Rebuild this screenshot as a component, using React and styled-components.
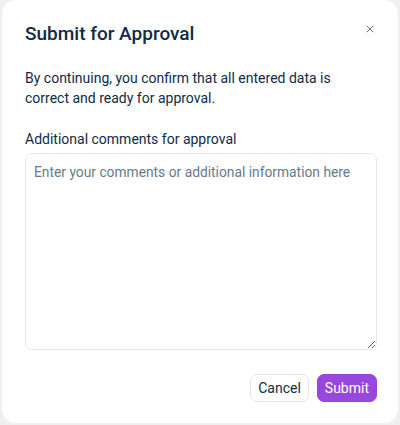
import React from "react";
import styled, { createGlobalStyle } from "styled-components";
import { X } from "lucide-react";

const GlobalStyle = createGlobalStyle`
  html, body {
    margin: 0;
    padding: 0;
    background: #efefef;
    font-family: Roboto, "Noto Sans", sans-serif;
  }
  * { box-sizing: border-box; }
`;

const Page = styled.div`
  width: 400px;
  height: 425px;
  padding: 0 2px 2px 2px;
  display: flex;
`;

const Dialog = styled.div`
  position: relative;
  flex: 1;
  background: #ffffff;
  border-radius: 14px;
  padding: 22px 21px 21px 23px;
  display: flex;
  flex-direction: column;
`;

const Title = styled.h2`
  margin: 0;
  font-size: 19px;
  font-weight: 500;
  line-height: 24px;
  color: #0f2b46;
`;

const CloseButton = styled.button`
  position: absolute;
  top: 21px;
  right: 20px;
  width: 16px;
  height: 16px;
  padding: 0;
  border: none;
  background: transparent;
  color: #2d4f6e;
  display: flex;
  align-items: center;
  justify-content: center;
  cursor: pointer;
`;

const Description = styled.p`
  margin: 22px 0 0 0;
  font-size: 14px;
  line-height: 20px;
  color: #0f2b46;
`;

const Label = styled.label`
  margin-top: 21px;
  font-size: 14px;
  line-height: 20px;
  color: #0f2b46;
`;

const TextArea = styled.textarea`
  margin-top: 4px;
  height: 197px;
  width: 100%;
  border: 1px solid #e3e6ea;
  border-radius: 7px;
  padding: 8px 8px;
  font-family: Roboto, "Noto Sans", sans-serif;
  font-size: 13.8px;
  line-height: 20px;
  color: #0f2b46;
  resize: vertical;
  outline: none;
  &::placeholder {
    color: #677a8c;
  }
`;

const Footer = styled.div`
  margin-top: 24px;
  display: flex;
  justify-content: flex-end;
  gap: 8px;
`;

const Button = styled.button`
  height: 28px;
  padding: 0 7px;
  border-radius: 7px;
  font-family: Roboto, "Noto Sans", sans-serif;
  font-size: 14px;
  cursor: pointer;
  border: 1px solid ${(p) => (p.$primary ? "#9747dc" : "#e3e6ea")};
  background: ${(p) => (p.$primary ? "#9747dc" : "#ffffff")};
  color: ${(p) => (p.$primary ? "#ffffff" : "#0f2b46")};
`;

export default function App() {
  return (
    <>
      <GlobalStyle />
      <Page>
        <Dialog>
          <Title>Submit for Approval</Title>
          <CloseButton aria-label="Close">
            <X size={12} strokeWidth={1.6} />
          </CloseButton>
          <Description>
            By continuing, you confirm that all entered data is correct and
            ready for approval.
          </Description>
          <Label>Additional comments for approval</Label>
          <TextArea placeholder="Enter your comments or additional information here" />
          <Footer>
            <Button>Cancel</Button>
            <Button $primary>Submit</Button>
          </Footer>
        </Dialog>
      </Page>
    </>
  );
}
